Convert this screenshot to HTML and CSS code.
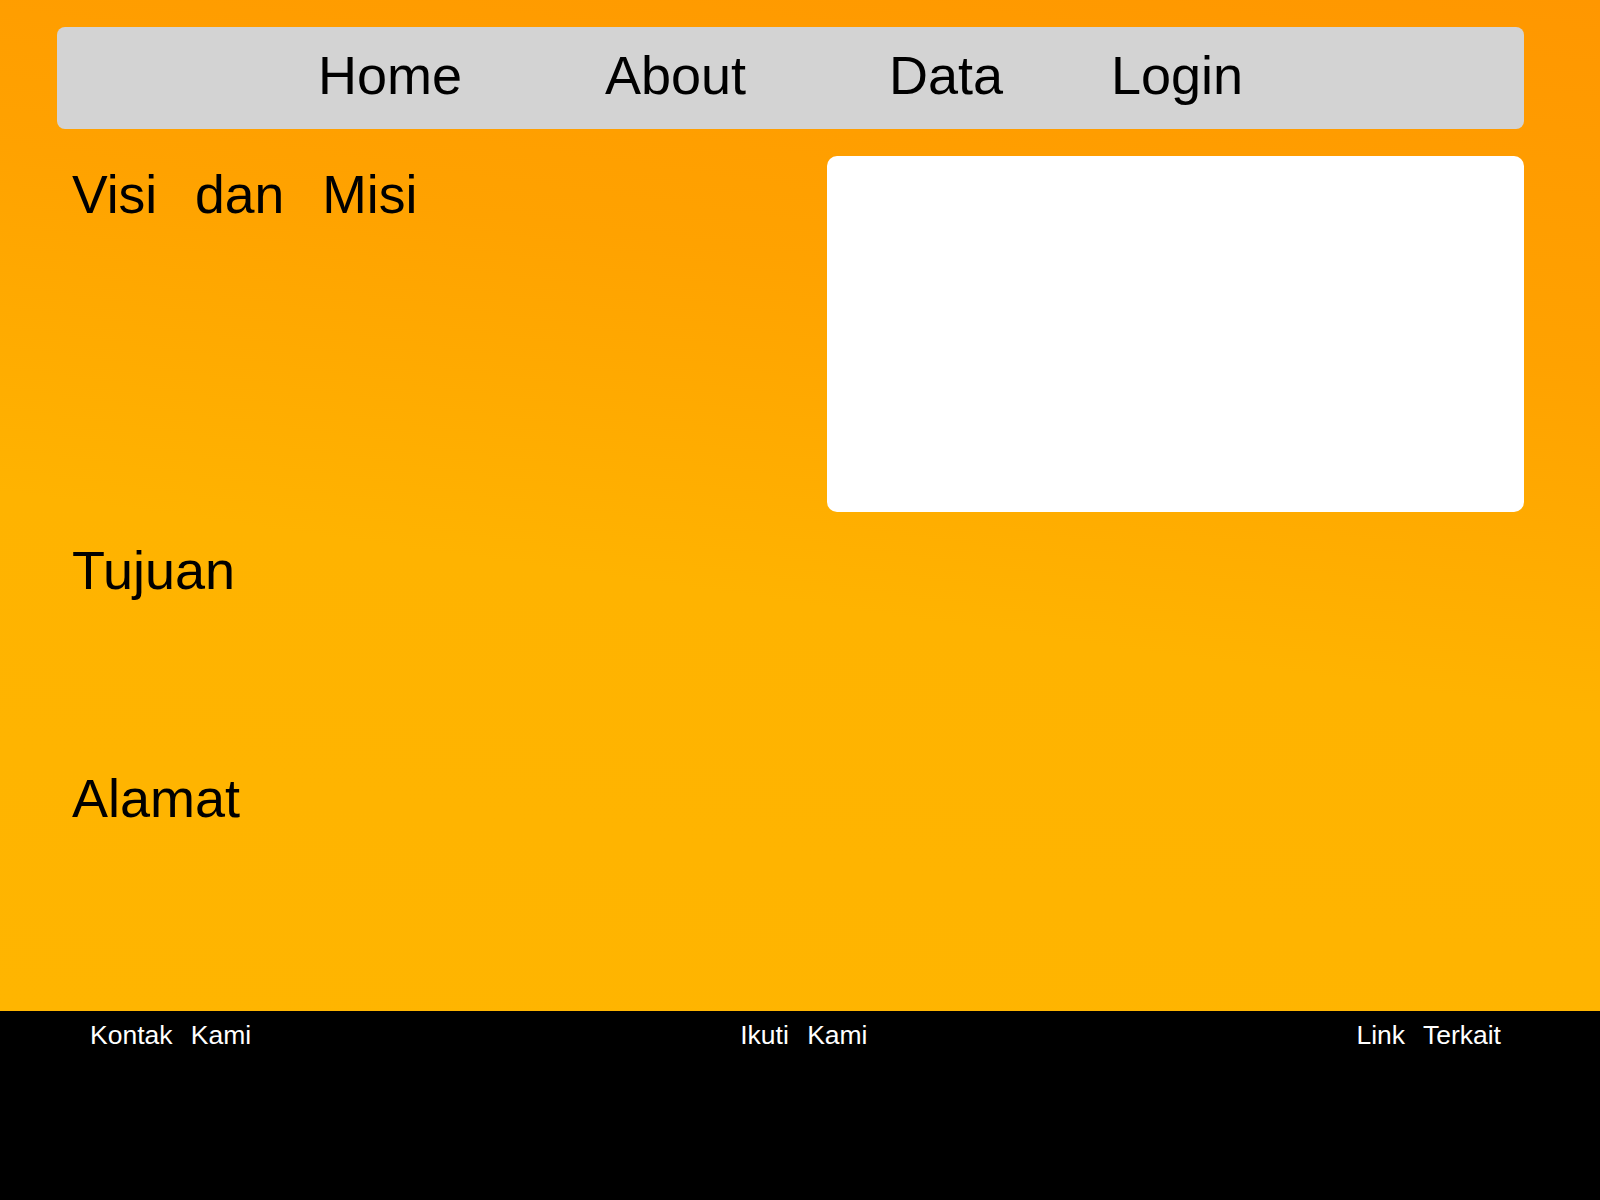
FILE: index.html
```html
<!DOCTYPE html>
<html lang="id">
<head>
<meta charset="utf-8">
<title>Visi dan Misi</title>
<link rel="stylesheet" href="styles.css">
</head>
<body>
<div class="page">
  <nav class="nav">
    <a class="nav-item nav-home" href="#">Home</a>
    <a class="nav-item nav-about" href="#">About</a>
    <a class="nav-item nav-data" href="#">Data</a>
    <a class="nav-item" href="#">Login</a>
  </nav>
  <div class="row">
    <section class="col-left">
      <h2 class="title title-first">Visi dan Misi</h2>
    </section>
    <div class="card"></div>
  </div>
  <section class="block block-tujuan">
    <h2 class="title title-alt">Tujuan</h2>
  </section>
  <section class="block">
    <h2 class="title title-alt">Alamat</h2>
  </section>
</div>
<footer class="footer">
  <span class="foot-item">Kontak Kami</span>
  <span class="foot-item">Ikuti Kami</span>
  <span class="foot-item">Link Terkait</span>
</footer>
</body>
</html>
```
FILE: styles.css
```css
* { box-sizing: border-box; }
html, body { margin: 0; padding: 0; }
body {
  font-family: "Liberation Sans", Arial, sans-serif;
  background: #000;
  width: 1600px;
  min-height: 1200px;
}
.page {
  height: 1011px;
  padding: 27px 76px 0 57px;
  background: linear-gradient(188deg, #ff9700 0%, #ffa200 30%, #ffb300 58%, #ffb500 100%);
}
.nav {
  height: 102px;
  background: #d3d3d3;
  border-radius: 8px;
  display: flex;
  align-items: flex-start;
  padding: 18px 0 0 261px;
}
.nav-item {
  font-size: 54px;
  line-height: 60px;
  color: #000;
  text-decoration: none;
}
.nav-home { width: 287px; }
.nav-about { width: 284px; }
.nav-data { width: 222px; }
.row {
  display: flex;
  margin-top: 27px;
  height: 356px;
}
.col-left {
  flex: 1;
  padding-left: 15px;
}
.card {
  width: 697px;
  height: 356px;
  background: #fff;
  border-radius: 10px;
}
.title {
  margin: 0;
  font-weight: normal;
  color: #000;
  line-height: 60px;
}
.title-first {
  font-size: 53.5px;
  margin-top: 9px;
  word-spacing: 23px;
}
.title-alt { font-size: 54px; }
.block {
  padding-left: 15px;
}
.block-tujuan {
  margin-top: 28px;
  height: 228px;
}
.footer {
  height: 189px;
  background: #000;
  display: flex;
  justify-content: space-between;
  align-items: flex-start;
  padding: 9px 99px 0 90px;
}
.foot-item {
  color: #fff;
  font-size: 26.5px;
  line-height: 30px;
  word-spacing: 11px;
}
```
